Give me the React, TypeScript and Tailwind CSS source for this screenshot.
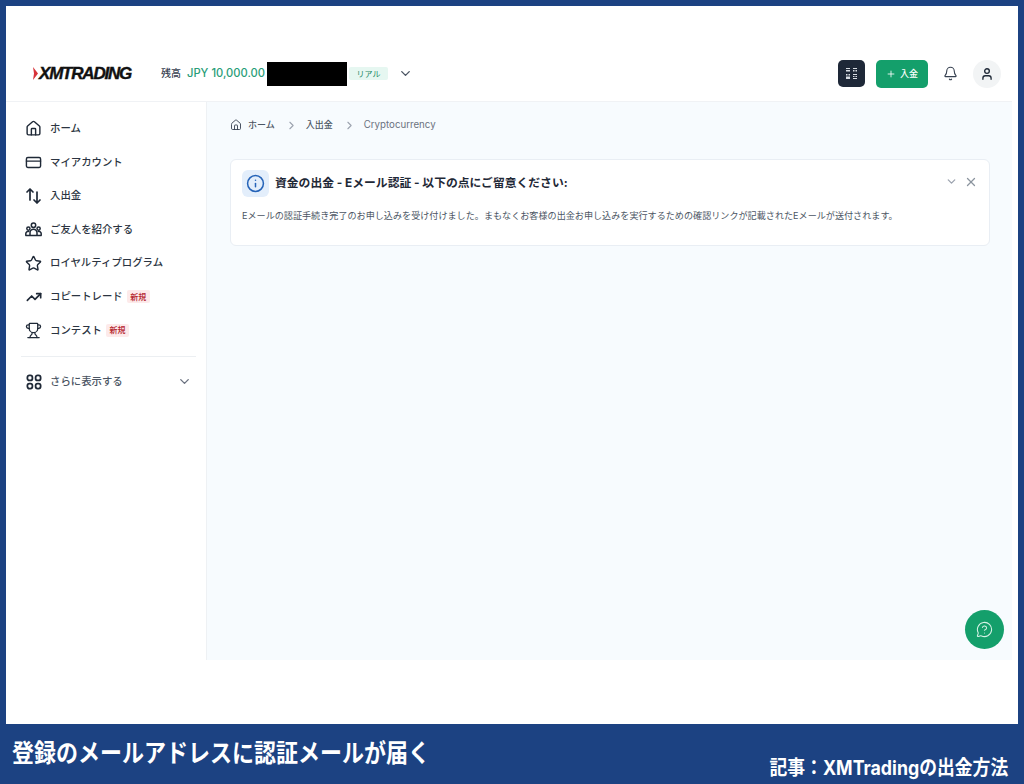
import { Bell, ChevronDown, ChevronRight, CreditCard, House, Info, MessageCircleQuestion, Plus, Star, Trophy, TrendingUp, User, X } from "lucide-react";
import type { ReactNode } from "react";

const FONT = "font-['Inter','Noto_Sans_CJK_JP',sans-serif]";

function TransferIcon() {
  return (
    <svg width="17" height="17" viewBox="0 0 17 17" fill="none" stroke="#1f2937" strokeWidth="1.7" strokeLinecap="round" strokeLinejoin="round">
      <path d="M5 13V2M2 5l3-3 3 3" />
      <path d="M12 5v11M9 13l3 3 3-3" />
    </svg>
  );
}

function PeopleIcon() {
  return (
    <svg width="17" height="17" viewBox="0 0 17 17" fill="none" stroke="#1f2937" strokeWidth="1.5" strokeLinecap="round" strokeLinejoin="round">
      <circle cx="8.5" cy="4.2" r="2.2" />
      <circle cx="3.4" cy="7.6" r="1.6" />
      <circle cx="13.6" cy="7.6" r="1.6" />
      <path d="M5 14v-2.2a3.5 3.5 0 0 1 7 0V14" />
      <path d="M0.8 14v-1.4a2.4 2.4 0 0 1 3-2.2M16.2 14v-1.4a2.4 2.4 0 0 0-3-2.2M0.8 14.6h15.4" />
    </svg>
  );
}

function DotsIcon() {
  return (
    <svg width="16" height="16" viewBox="0 0 16 16" fill="none" stroke="#1f2937" strokeWidth="1.8">
      <rect x="1.4" y="1.4" width="5" height="5" rx="2" />
      <rect x="9.6" y="1.4" width="5" height="5" rx="2" />
      <rect x="1.4" y="9.6" width="5" height="5" rx="2" />
      <rect x="9.6" y="9.6" width="5" height="5" rx="2" />
    </svg>
  );
}

const NAV_ITEMS: { label: string; icon: ReactNode; badge?: boolean }[] = [
  { label: "ホーム", icon: <House size={17} strokeWidth={2} className="text-[#1f2937]" /> },
  { label: "マイアカウント", icon: <CreditCard size={17} strokeWidth={2} className="text-[#1f2937]" /> },
  { label: "入出金", icon: <TransferIcon /> },
  { label: "ご友人を紹介する", icon: <PeopleIcon /> },
  { label: "ロイヤルティプログラム", icon: <Star size={17} strokeWidth={2} className="text-[#1f2937]" /> },
  { label: "コピートレード", icon: <TrendingUp size={16} strokeWidth={2.5} className="text-[#1f2937]" />, badge: true },
  { label: "コンテスト", icon: <Trophy size={19} strokeWidth={1.8} className="text-[#1f2937]" />, badge: true },
];

function NewBadge() {
  return (
    <span className="ml-[4px] flex h-[13px] items-center rounded-[2px] bg-[#fdeaea] px-[3.5px] text-[8px] font-medium text-[#b4232c]">
      新規
    </span>
  );
}

function Sidebar() {
  return (
    <aside className="flex w-[201px] shrink-0 flex-col border-r border-[#eef1f4] bg-white pl-[19px] pr-[10px] pt-[10px]">
      {NAV_ITEMS.map((item) => (
        <div key={item.label} className="flex h-[33.6px] items-center">
          <span className="flex w-[17px] shrink-0 items-center justify-center">{item.icon}</span>
          <span className="ml-[8px] text-[10.4px] font-medium text-[#2b3441]">{item.label}</span>
          {item.badge && <NewBadge />}
        </div>
      ))}
      <div className="-ml-[4px] mt-[9px] border-t border-[#eceff2]" />
      <div className="mt-[8px] flex h-[33px] items-center">
        <span className="flex w-[17px] shrink-0 items-center justify-center">
          <DotsIcon />
        </span>
        <span className="ml-[8px] flex-1 text-[10.4px] font-medium text-[#4b5563]">さらに表示する</span>
        <ChevronDown size={15} strokeWidth={2.2} className="mr-[4px] text-[#6b7280]" />
      </div>
    </aside>
  );
}

function WidgetIcon() {
  return (
    <svg width="13" height="13" viewBox="0 0 13 13" fill="#d9dde3">
      <path d="M1 1h4v1H1zM1 3h4v1.5H1zM8 1h4v1H8zM8 3h1.5v1.5H8zM10.5 3H12v1.5h-1.5z" />
      <path d="M1 7h1.5v1.5H1zM3.5 7H5v1.5H3.5zM1 9.5h4V12H1zM8 7h4v1H8zM8 9h1.5v1H8zM10.5 9H12v1h-1.5zM8 11h4v1H8z" />
    </svg>
  );
}

function Header() {
  return (
    <header className="flex h-[96px] items-center border-b border-[#f0f2f5] bg-white pb-[12px] pl-[27px] pr-[11px] pt-[52px]">
      <div className="flex w-[128px] items-center">
        <svg width="6" height="13" viewBox="0 0 6 13" className="shrink-0">
          <path d="M0 0 L5 6.5 L0 13 L1 6.5 Z" fill="#d8343a" />
        </svg>
        <span className="font-['Liberation_Sans',sans-serif] text-[17px] font-bold italic tracking-[-1.2px] text-[#111] [-webkit-text-stroke:0.4px_#111]">
          XMTRADING
        </span>
      </div>
      <span className="text-[10px] font-medium text-[#374151]">残高</span>
      <span className="ml-[6px] text-[11.2px] font-medium text-[#2a9d78]">JPY 10,000.00</span>
      <div className="ml-[2px] h-[24px] w-[80px] bg-black" />
      <span className="ml-[2px] flex h-[13px] w-[39px] items-center justify-center rounded-[2px] bg-[#e6f7f1] text-[8px] text-[#1f8a66]">
        リアル
      </span>
      <ChevronDown size={15} strokeWidth={2.2} className="ml-[10px] text-[#4b5563]" />
      <div className="ml-auto flex items-center">
        <div className="flex h-[27px] w-[27px] items-center justify-center rounded-[5px] bg-[#1e2838]">
          <WidgetIcon />
        </div>
        <div className="ml-[11px] flex h-[28px] w-[52px] items-center justify-center gap-[4px] rounded-[5px] bg-[#149f6b] text-[9px] font-medium text-white">
          <Plus size={10} />
          入金
        </div>
        <Bell size={15} strokeWidth={1.8} className="ml-[15px] text-[#374151]" />
        <div className="ml-[15px] flex h-[28px] w-[28px] items-center justify-center rounded-full bg-[#f2f4f5]">
          <User size={14} strokeWidth={2.3} className="text-[#1f2937]" />
        </div>
      </div>
    </header>
  );
}

function Breadcrumb() {
  return (
    <div className="flex h-[14px] items-center text-[9px] font-medium text-[#4b5563]">
      <House size={12} strokeWidth={1.8} className="text-[#374151]" />
      <span className="ml-[6px]">ホーム</span>
      <ChevronRight size={13} className="ml-[10px] mr-[8px] text-[#9ca3af]" />
      <span>入出金</span>
      <ChevronRight size={13} className="ml-[10px] mr-[8px] text-[#9ca3af]" />
      <span className="text-[9.7px] font-normal text-[#6b7280]">Cryptocurrency</span>
    </div>
  );
}

function Notice() {
  return (
    <section className="mt-[27px] h-[87px] rounded-[6px] border border-[#e9eef4] bg-white pl-[11px] pr-[11px] pt-[10px]">
      <div className="flex items-center">
        <div className="flex h-[27px] w-[27px] items-center justify-center rounded-[6px] bg-[#e3eefb]">
          <Info size={19} strokeWidth={1.9} className="text-[#2563b8]" />
        </div>
        <h2 className="ml-[6px] mt-[1px] flex-1 text-[11.8px] font-bold text-[#1f2937]">
          資金の出金 - Eメール認証 - 以下の点にご留意ください:
        </h2>
        <ChevronDown size={13} strokeWidth={2.4} className="mb-[4px] text-[#9ca3af]" />
        <X size={14} strokeWidth={2.2} className="mb-[4px] ml-[6px] text-[#8b949e]" />
      </div>
      <p className="mt-[12px] whitespace-nowrap text-[9.1px] text-[#4b5563]">
        Eメールの認証手続き完了のお申し込みを受け付けました。まもなくお客様の出金お申し込みを実行するための確認リンクが記載されたEメールが送付されます。
      </p>
    </section>
  );
}

export default function App() {
  return (
    <div className={`${FONT} flex h-[784px] w-[1024px] flex-col overflow-hidden bg-[#1c4282]`}>
      <div className="mx-[6px] mt-[6px] flex h-[718px] flex-col bg-white pr-[6px]">
        <Header />
        <div className="flex h-[558px]">
          <Sidebar />
          <main className="relative flex-1 bg-[#f7fbfe] pl-[23px] pr-[22px] pt-[16px]">
            <Breadcrumb />
            <Notice />
            <div className="absolute bottom-[11px] right-[8px] flex h-[39px] w-[39px] items-center justify-center rounded-full bg-[#149f6b]">
              <MessageCircleQuestion size={17} strokeWidth={1.5} className="text-[#d6f2e6]" />
            </div>
          </main>
        </div>
      </div>
      <footer className="flex h-[60px] items-start justify-between pl-[12px] pr-[16px] font-bold text-white">
        <span className="mt-[14px] origin-left scale-x-[0.88] whitespace-nowrap text-[25px] leading-[30px]">
          登録のメールアドレスに認証メールが届く
        </span>
        <span className="mt-[31px] origin-right scale-x-[0.89] whitespace-nowrap text-[20px] leading-[26px]">
          記事：XMTradingの出金方法
        </span>
      </footer>
    </div>
  );
}
